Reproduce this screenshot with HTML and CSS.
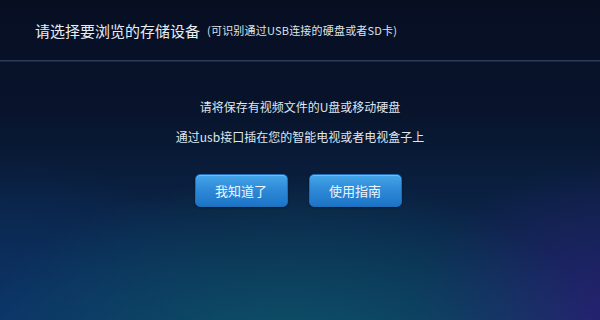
FILE: index.html
```html
<!DOCTYPE html>
<html lang="zh-CN">
<head>
<meta charset="utf-8">
<title>存储设备</title>
<link rel="stylesheet" href="styles.css">
</head>
<body>
<div class="screen">
  <header class="header">
    <h1 class="title">请选择要浏览的存储设备</h1>
    <span class="subtitle">(可识别通过USB连接的硬盘或者SD卡)</span>
  </header>
  <main class="main">
    <p class="msg">请将保存有视频文件的U盘或移动硬盘</p>
    <p class="msg">通过usb接口插在您的智能电视或者电视盒子上</p>
    <div class="actions">
      <button class="btn">我知道了</button>
      <button class="btn">使用指南</button>
    </div>
  </main>
</div>
</body>
</html>
```
FILE: styles.css
```css
html, body {
  margin: 0;
  padding: 0;
}
body {
  width: 600px;
  height: 320px;
  overflow: hidden;
  font-family: "Noto Sans CJK SC", "Noto Sans", sans-serif;
}
.screen {
  width: 600px;
  height: 320px;
  background:
    radial-gradient(ellipse 55% 60% at 48% 115%, rgba(14, 88, 108, 0.9), rgba(14, 88, 108, 0) 100%),
    radial-gradient(ellipse 35% 55% at 102% 105%, rgba(42, 30, 115, 0.95), rgba(42, 30, 115, 0) 100%),
    radial-gradient(ellipse 45% 55% at 0% 105%, rgba(12, 52, 108, 0.85), rgba(12, 52, 108, 0) 100%),
    linear-gradient(180deg, #070e22 0%, #08142c 35%, #0a2244 65%, #0b2f57 100%);
  display: flex;
  flex-direction: column;
}
.header {
  height: 62px;
  box-sizing: border-box;
  display: flex;
  align-items: center;
  padding-left: 35px;
  padding-bottom: 1px;
  border-bottom: 1px solid #1c2740;
  box-shadow: inset 0 -1px 0 #2e3a55;
}
.title {
  margin: 0;
  font-size: 15px;
  font-weight: 400;
  color: #e8edf3;
}
.subtitle {
  margin-left: 7px;
  font-size: 11px;
  letter-spacing: 0.2px;
  color: #dde4ec;
}
.main {
  display: flex;
  flex-direction: column;
  align-items: center;
  padding-top: 35px;
}
.msg {
  margin: 0 0 10px;
  font-size: 12px;
  line-height: 20px;
  color: #dfe6ee;
}
.actions {
  display: flex;
  gap: 21px;
  margin-top: 17px;
  padding-right: 4px;
}
.btn {
  width: 93px;
  height: 33px;
  border: 1px solid #1f6fb8;
  border-radius: 5px;
  background: linear-gradient(180deg, #45a6ea 0%, #2f8ad8 45%, #1c74c6 100%);
  box-shadow: inset 0 1px 0 rgba(160, 215, 255, 0.5), 0 1px 2px rgba(0, 0, 0, 0.35);
  color: #eef5fc;
  font-family: "Noto Sans CJK SC", "Noto Sans", sans-serif;
  font-size: 13px;
  padding: 0;
  cursor: pointer;
}
```
